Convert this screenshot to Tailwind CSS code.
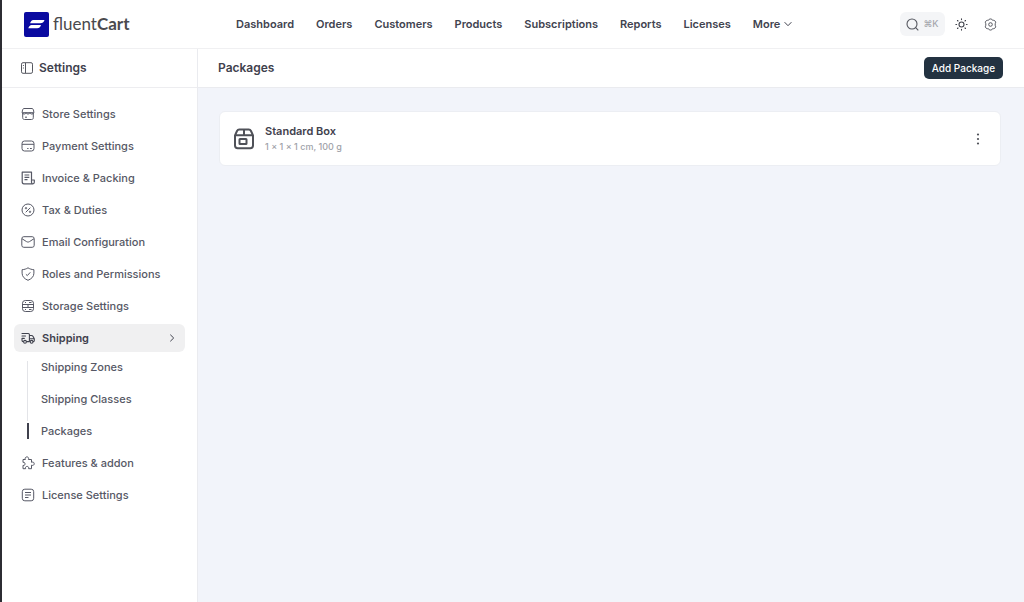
<!DOCTYPE html>
<html lang="en">
<head>
  <meta charset="UTF-8" />
  <meta name="viewport" content="width=device-width, initial-scale=1.0" />
  <title>Packages - FluentCart</title>
  <script src="https://cdn.jsdelivr.net/npm/@tailwindcss/browser@4"></script>
</head>
<body class="relative min-h-screen flex flex-col bg-white border-l-2 border-[#2c2c32] font-['Inter',sans-serif] text-[11px] leading-4 font-medium text-[#565865]">

  <!-- Window edge marker -->
  <div class="absolute -left-0.5 top-[61px] h-[26px] w-0.5 border-y-8 border-[#4f8fb5] bg-[#e6eef5]"></div>

  <!-- Top bar -->
  <header class="h-[49px] shrink-0 flex items-center border-b border-[#f0f0f2] bg-white pl-[22px] pr-[27px]">
    <a href="#" class="w-[212px] flex items-center gap-1 text-[#4a4a4e]">
      <svg class="size-[25px] shrink-0" viewBox="0 0 25 25">
        <rect width="25" height="25" rx="2" fill="#0a0aa0" />
        <path d="M9.300 8h11.200c-.8 2.200-2 3.300-4.300 3.300H6.100c.6-2 1.500-3.300 3.200-3.300z" fill="#fff" />
        <path d="M7.600 13h9.400c-.7 2.200-1.800 3.300-3.900 3.300H4.300c.6-1.900 1.700-3.300 3.300-3.300z" fill="#fff" />
      </svg>
      <span class="font-['Lato',sans-serif] text-[17px] leading-6 font-normal">fluent<b class="font-bold">Cart</b></span>
    </a>

    <nav class="flex items-center gap-[22px] text-[#41434f] font-semibold">
      <a href="#">Dashboard</a>
      <a href="#">Orders</a>
      <a href="#">Customers</a>
      <a href="#">Products</a>
      <a href="#">Subscriptions</a>
      <a href="#">Reports</a>
      <a href="#">Licenses</a>
      <button type="button" class="flex items-center gap-1">More
        <svg class="w-2 h-2" viewBox="0 0 8 8" fill="none" stroke="currentColor"><path d="M.6 2.200 4 5.700l3.400-3.500" /></svg>
      </button>
    </nav>

    <div class="ml-auto flex items-center">
      <button type="button" aria-label="Search" class="h-6 w-[45px] flex items-center justify-center gap-1 rounded-md bg-[#f4f5f7] text-[9px] text-[#a5a7ad]">
        <svg class="size-[13px] text-[#55575f]" viewBox="0 0 13 13" fill="none" stroke="currentColor" stroke-width="1.100"><circle cx="6" cy="6" r="5" /><path d="m9.700 9.700 2.600 2.600" /></svg>
        <span>⌘K</span>
      </button>
      <button type="button" aria-label="Theme" class="ml-2.5">
        <svg class="size-[13px]" viewBox="0 0 13 13" fill="none" stroke="#3f414a" stroke-width="1.100" stroke-linecap="round"><circle cx="6.500" cy="6.500" r="2.500" /><path d="M6.500.9v.7M6.500 11.400v.7M.9 6.500h.7M11.400 6.500h.7M2.500 2.500l.5.5M10 10l.5.5M10.500 2.500l-.5.5M3 10l-.5.5" /></svg>
      </button>
      <button type="button" aria-label="Settings" class="ml-4">
        <svg class="size-[13px]" viewBox="0 0 13 13" fill="none" stroke="#55575f" stroke-linejoin="round"><path d="M5.200 1.300c.8-.5 1.800-.5 2.600 0l.6.9 1.200.1c.9.100 1.600.6 2 1.500.2.800 0 1.300-.4 1.900v1.600c.4.600.6 1.100.4 1.900-.4.900-1.100 1.400-2 1.500l-1.200.1-.6.9c-.8.5-1.800.5-2.600 0l-.6-.9-1.200-.1c-.9-.1-1.600-.6-2-1.500-.2-.8 0-1.300.4-1.900V5.700c-.4-.6-.6-1.100-.4-1.900.4-.9 1.100-1.400 2-1.500l1.200-.1z" /><circle cx="6.500" cy="6.500" r="1.800" /></svg>
      </button>
    </div>
  </header>

  <div class="flex-1 flex">
    <!-- Settings sidebar -->
    <aside class="w-[196px] shrink-0 border-r border-[#eaebef]">
      <div class="h-[39px] flex items-center gap-1.5 border-b border-[#ededf0] pl-[19px] text-xs text-[#3f414d] font-semibold">
        <svg class="size-3" viewBox="0 0 12 12" fill="none" stroke="#55575f"><rect x=".5" y=".7" width="11" height="10.600" rx="1.500" /><path d="M4.500 1v10M2.400 3v1M2.400 5.500v1" /></svg>
        <h2>Settings</h2>
      </div>

      <nav class="flex flex-col gap-1 pt-3 pl-3 pr-3 [&_svg]:shrink-0">
        <a href="#" class="h-7 flex items-center gap-[7px] px-[7px]">
          <svg class="size-3.5" viewBox="0 0 14 14" fill="none" stroke="currentColor" stroke-linejoin="round"><path d="M3 1.500h8c1.200 0 1.800 1.700 1.800 4.200H1.200C1.200 3.200 1.800 1.500 3 1.500zM1.700 6v4.700c0 1.200.6 1.800 1.800 1.800h7c1.200 0 1.800-.6 1.800-1.800V6M1.200 5.700c.3 1.800 3.600 1.800 3.900 0 .3 1.800 3.500 1.800 3.800 0 .3 1.800 3.600 1.800 3.900 0M4 10.200h2" /></svg>
          Store Settings
        </a>
        <a href="#" class="h-7 flex items-center gap-[7px] px-[7px]">
          <svg class="size-3.5" viewBox="0 0 14 14" fill="none" stroke="currentColor"><rect x="1" y="2" width="12" height="10" rx="2.500" /><path d="M1 5.300h12M6.200 9.500h1.300M9 9.500h1.800" /></svg>
          Payment Settings
        </a>
        <a href="#" class="h-7 flex items-center gap-[7px] px-[7px]">
          <svg class="size-3.5" viewBox="0 0 14 14" fill="none" stroke="currentColor" stroke-width="1.200" stroke-linejoin="round"><path d="M10.500 9V1.200H1.200v9.600c0 1.200.6 2 1.700 2h9c.9 0 1.400-.6 1.400-1.500V9h-2.800v2.300c0 .9.600 1.500 1.400 1.500M3.500 4h4.800M3.500 6.300h4.800M3.500 8.600h3" /></svg>
          Invoice &amp; Packing
        </a>
        <a href="#" class="h-7 flex items-center gap-[7px] px-[7px]">
          <svg class="size-3.5" viewBox="0 0 14 14" fill="none" stroke="currentColor"><circle cx="7" cy="7" r="6" /><path d="m4.700 9.300 4.600-4.600" /><circle cx="5" cy="5.200" r=".7" /><circle cx="9" cy="8.800" r=".7" /></svg>
          Tax &amp; Duties
        </a>
        <a href="#" class="h-7 flex items-center gap-[7px] px-[7px]">
          <svg class="size-3.5" viewBox="0 0 14 14" fill="none" stroke="currentColor" stroke-linejoin="round"><rect x=".8" y="1.700" width="12.400" height="10.600" rx="2" /><path d="m1 3.700 4.500 2.900c1 .6 2 .6 3 0L13 3.700" /></svg>
          Email Configuration
        </a>
        <a href="#" class="h-7 flex items-center gap-[7px] px-[7px]">
          <svg class="size-3.5" viewBox="0 0 14 14" fill="none" stroke="currentColor" stroke-linejoin="round"><path d="M7 .8c1.800 1.200 3.600 1.700 5.900 1.900v3.500c0 3.500-2.500 5.700-5.900 7.100-3.400-1.400-5.900-3.600-5.900-7.100V2.700C3.400 2.500 5.200 2 7 .8z" /><path d="m4.900 7.300 1.400 1.300 3-3.300" /></svg>
          Roles and Permissions
        </a>
        <a href="#" class="h-7 flex items-center gap-[7px] px-[7px]">
          <svg class="size-3.5" viewBox="0 0 14 14" fill="none" stroke="currentColor"><rect x="1.500" y="1.500" width="11" height="11" rx="2.800" /><path d="M1.500 5.500h11M1.500 8.500h11M4 3.500h1M8 3.500h2.500M4 10.500h1M8 10.500h2.500M7 5.500v3" /></svg>
          Storage Settings
        </a>
        <a href="#" class="h-7 flex items-center gap-[7px] px-[7px] rounded-md bg-[#f0f0f1] text-[#3f414d] font-semibold">
          <svg class="size-3.5" viewBox="0 0 14 14" fill="none" stroke="currentColor" stroke-width="1.100" stroke-linecap="round" stroke-linejoin="round"><path d="M1 2.500h6.300c.7 0 1.100.4 1.100 1.100v7H5.700M1 5h3.500M1 7.400h2.300M1 7.500v1.800c0 .8.300 1.300 1.200 1.300M8.400 4.500h2c.8 0 1.300.4 1.700 1.100l1.200 2.200v1.700c0 .7-.4 1.100-1 1.100M8.400 7.700h4.700" /><circle cx="4" cy="10.800" r="1.400" /><circle cx="10.600" cy="10.800" r="1.400" /></svg>
          Shipping
          <svg class="size-2 ml-auto mr-0.5" viewBox="0 0 8 8" fill="none" stroke="currentColor"><path d="m2.300.7 3.400 3.300-3.400 3.300" /></svg>
        </a>

        <ul class="-mt-[3px] ml-[13px] flex flex-col gap-1 [&>li]:h-7 [&>li]:flex [&>li]:items-center">
          <li class="relative after:absolute after:left-0 after:top-2 after:h-6 after:w-px after:bg-[#e3e4e8]"><a href="#" class="pl-[14px]">Shipping Zones</a></li>
          <li class="relative after:absolute after:left-0 after:top-0 after:h-9 after:w-px after:bg-[#e3e4e8]"><a href="#" class="pl-[14px]">Shipping Classes</a></li>
          <li><a href="#" class="h-4 border-l-2 border-[#3f414d] pl-3">Packages</a></li>
        </ul>

        <a href="#" class="h-7 flex items-center gap-[7px] px-[7px]">
          <svg class="size-3.5" viewBox="0 0 14 14" fill="none" stroke="currentColor" stroke-linejoin="round"><path d="M2 3.500h2.400C3.700 1.800 4.700.9 5.900.9s2.200.9 1.500 2.600h3.100v2.800c1.800-.7 2.700.300 2.700 1.400s-.9 2.200-2.700 1.500v3.500H7.600c.5-1.600-.5-2.300-1.500-2.300s-2 .7-1.500 2.300H2V9.400c1.500.4 2-.6 2-1.500S3.500 6 2 6.400z" /></svg>
          Features &amp; addon
        </a>
        <a href="#" class="h-7 flex items-center gap-[7px] px-[7px]">
          <svg class="size-3.5" viewBox="0 0 14 14" fill="none" stroke="currentColor"><rect x="1.300" y="1.200" width="11.400" height="11.600" rx="2.500" /><path d="M4 4.500h6M4 7h6M4 9.500h3.500" /></svg>
          License Settings
        </a>
      </nav>
    </aside>

    <!-- Page content -->
    <main class="flex-1 flex flex-col bg-[#f2f4fa]">
      <div class="h-[39px] flex items-center justify-between border-b border-[#eaebef] bg-white pl-5 pr-[21px]">
        <h1 class="text-xs text-[#3f414d] font-semibold">Packages</h1>
        <button type="button" class="h-[22px] rounded-[5px] bg-[#233241] px-2 text-[10px] text-white font-medium">Add Package</button>
      </div>

      <section class="mt-[23px] ml-[21px] mr-[23px] h-[55px] flex items-center rounded-md border border-[#eceef3] bg-white pl-[13px] pr-[18px]">
        <svg class="size-[22px]" viewBox="0 0 22 22" fill="none" stroke="#4f5158" stroke-width="2" stroke-linejoin="round"><path d="M2 7.300 4 3c.5-1 1.200-1.500 2.200-1.500h9.600c1 0 1.700.5 2.200 1.500l2 4.300v10.200c0 1.700-1 2.700-2.700 2.700H4.700C3 20.200 2 19.200 2 17.500zM2 7.300h18M11 1.500v5.800" /><rect x="6.500" y="11" width="7" height="5" rx=".5" /></svg>
        <div class="ml-2.5">
          <h3 class="text-[#3f414d] font-semibold">Standard Box</h3>
          <p class="text-[9px] text-[#a0a2a9] font-medium">1 × 1 × 1 cm, 100 g</p>
        </div>
        <button type="button" aria-label="Package actions" class="ml-auto">
          <svg class="w-2 h-3.5" viewBox="0 0 8 14" fill="#4f5158"><circle cx="4" cy="2.500" r="1.100" /><circle cx="4" cy="7" r="1.100" /><circle cx="4" cy="11.500" r="1.100" /></svg>
        </button>
      </section>
    </main>
  </div>
</body>
</html>
